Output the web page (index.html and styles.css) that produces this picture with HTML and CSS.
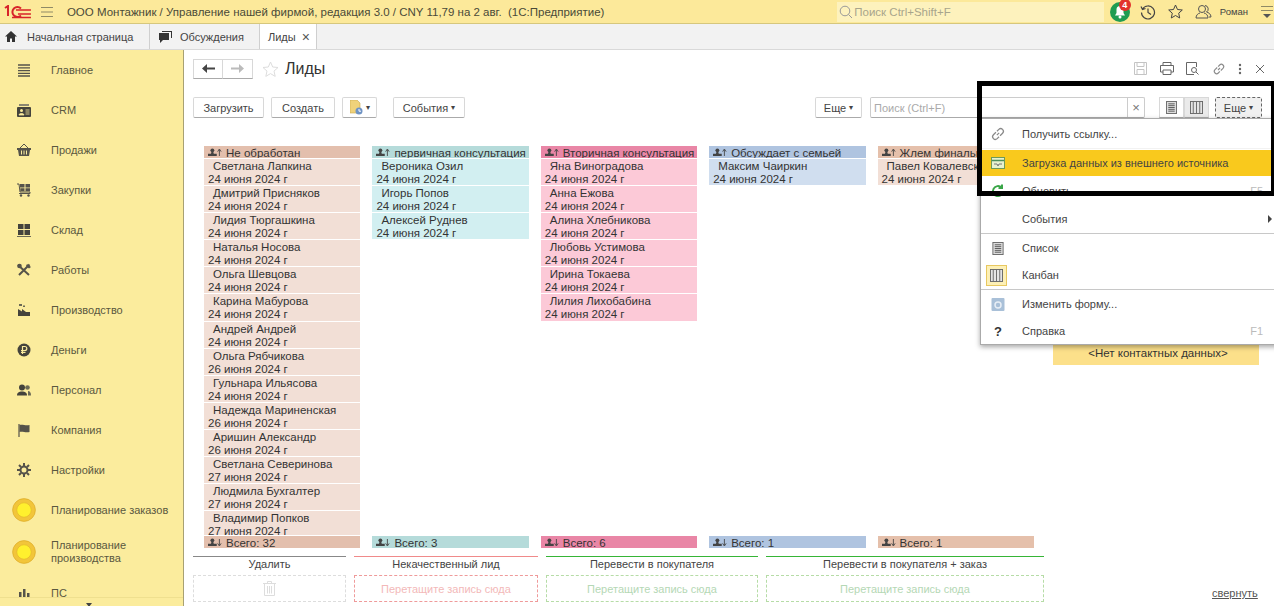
FILE: index.html
```html
<!DOCTYPE html>
<html lang="ru">
<head>
  <meta charset="UTF-8" />
  <title>Лиды</title>
  <link rel="stylesheet" href="styles.css">
</head>
<body>

<svg class="defs" width="0" height="0">
  <symbol id="i-up" viewBox="0 0 16 10">
    <circle cx="5" cy="2.5" r="2.2" fill="#444"/>
    <path d="M4 4h2l.6 2.5H10V9H0V6.5h3.4z" fill="#444"/>
    <path d="M13 9V2M11 4l2-3 2 3" fill="none" stroke="#444"/>
  </symbol>
  <symbol id="i-down" viewBox="0 0 16 10">
    <circle cx="5" cy="2.5" r="2.2" fill="#444"/>
    <path d="M4 4h2l.6 2.5H10V9H0V6.5h3.4z" fill="#444"/>
    <path d="M13 1v7M11 6l2 3 2-3" fill="none" stroke="#444"/>
  </symbol>
  <symbol id="i-link" viewBox="0 0 14 14">
    <path d="M6 8l2-2M5.2 5.5L3 7.7a2.3 2.3 0 0 0 3.3 3.3l1.6-1.6M8.8 8.5L11 6.3A2.3 2.3 0 0 0 7.7 3L6.1 4.6" fill="none" stroke="#8a8a8a" stroke-width="1.1"/>
  </symbol>
  <symbol id="i-list" viewBox="0 0 12 14">
    <rect x=".5" y=".5" width="11" height="13" fill="#ddd" stroke="#666"/>
    <path d="M2.5 3h7M2.5 5h7M2.5 7h7M2.5 9h7M2.5 11h7" stroke="#555"/>
  </symbol>
  <symbol id="i-kanban" viewBox="0 0 14 14">
    <rect x=".5" y=".5" width="13" height="13" fill="#e4e4e4" stroke="#666"/>
    <path d="M3.5 1v12M7 1v12M10.500 1v12" stroke="#666"/>
  </symbol>
  <symbol id="i-sun" viewBox="0 0 40 40">
    <circle cx="20" cy="20" r="19" fill="#f2c53a" stroke="#d9a520" stroke-width="1"/>
    <circle cx="20" cy="20" r="12" fill="#fff02e" stroke="#e0b528"/>
  </symbol>
</svg>

<header class="topbar">
  <svg class="logo" width="28" height="14" viewBox="0 0 28 14">
    <path d="M1 3l3-2v10" fill="none" stroke="#d8232a" stroke-width="2"/>
    <path d="M17 3.500a5 5 0 1 0 0 7" fill="none" stroke="#d8232a" stroke-width="2"/>
    <path d="M12 5h15M14 9h13M8 12.500h19" fill="none" stroke="#d8232a" stroke-width="1.500"/>
  </svg>
  <svg class="burger" width="14" height="12" viewBox="0 0 14 12"><path d="M1 1.500h12M1 6h12M1 10.500h12" stroke="#8f8a66" stroke-width="1.200"/></svg>
  <div class="app-title">ООО Монтажник / Управление нашей фирмой, редакция 3.0 / CNY 11,79 на 2 авг.&nbsp; (1С:Предприятие)</div>
  <div class="top-search">
    <svg width="14" height="14" viewBox="0 0 14 14"><circle cx="6" cy="6" r="4.800" fill="none" stroke="#999"/><path d="M9.500 9.500l3.500 3.500" stroke="#999"/></svg>
    <span>Поиск Ctrl+Shift+F</span>
  </div>
  <div class="bell">
    <svg width="20" height="20" viewBox="0 0 20 20"><circle cx="10" cy="10" r="10" fill="#1f9c52"/><path d="M10 4a3.500 3.500 0 0 0-3.500 3.500V11L5 13.500h10L13.500 11V7.500A3.500 3.500 0 0 0 10 4z" fill="#fff"/><circle cx="10" cy="15" r="1.500" fill="#fff"/></svg>
    <span class="badge">4</span>
  </div>
  <svg class="top-ic hist" width="16" height="16" viewBox="0 0 16 16"><path d="M2.500 5a6.500 6.500 0 1 1-1 3.500M1 2.500L2.500 5.500 5.500 4.500M8 4.500V8.500L11 10.500" fill="none" stroke="#444" stroke-width="1.200"/></svg>
  <svg class="top-ic star" width="15" height="15" viewBox="0 0 15 15"><path d="M7.500 1l2 4.500 4.800.5-3.600 3.200 1 4.800-4.200-2.500L3.300 14l1-4.800L.7 6l4.800-.5z" fill="none" stroke="#444"/></svg>
  <svg class="top-ic user" width="17" height="15" viewBox="0 0 17 15"><circle cx="7" cy="5" r="3.500" fill="none" stroke="#555"/><path d="M1 14c0-3 2-4.500 4-5M13 14c0-3-2-4.500-4-5M1 14h12M10 1.500a3.500 3.500 0 0 1 1.500 6.500c2 .5 4.500 2 4.500 5h-2" fill="none" stroke="#555"/></svg>
  <span class="user-name">Роман</span>
  <svg class="top-ic more" width="14" height="14" viewBox="0 0 14 14"><path d="M1 1.500h12M1 5.500h12" stroke="#8f8a66"/><path d="M3 9h8l-4 4z" fill="#555"/></svg>
</header>

<nav class="tabs">
  <div class="tab tab-home">
    <svg width="12" height="11" viewBox="0 0 12 11"><path d="M6 0L0 5.500h2V11h3V7.500h2V11h3V5.500h2z" fill="#333"/></svg>
    Начальная страница
  </div>
  <div class="tab tab-talk">
    <svg width="15" height="13" viewBox="0 0 15 13"><path d="M4 1h10v7h-1V2H4z" fill="#333"/><path d="M1 3h10v7H5l-3 3v-3H1z" fill="#333"/></svg>
    Обсуждения
  </div>
  <div class="tab tab-active">Лиды <span class="tab-x">×</span></div>
</nav>

<div class="main">
  <aside class="sidebar">
    <a class="side-row"><svg viewBox="0 0 14 14"><path d="M1 2h12M1 4.800h12M1 7.600h12M1 10.400h12M1 13h12" stroke="#55534a" stroke-width="1.300"/></svg><span>Главное</span></a>
    <a class="side-row"><svg viewBox="0 0 14 14"><path d="M2 1h10v2H2z" fill="#8a8670"/><rect y="4" width="14" height="10" rx="1" fill="#44433c"/><circle cx="4.500" cy="7.500" r="1.500" fill="#fbec9d"/><path d="M2 12c0-2 5-2 5 0zM8.500 7h4M8.500 9h4M8.500 11h4" fill="#fbec9d" stroke="#fbec9d" stroke-width=".8"/></svg><span>CRM</span></a>
    <a class="side-row"><svg viewBox="0 0 14 14"><path d="M3 5l4-4 4 4" fill="none" stroke="#55534a"/><path d="M0 5h14v2h-1l-1 6H2L1 7H0z" fill="#55534a"/><path d="M4.500 7.500v4M7 7.500v4M9.500 7.500v4" stroke="#fbec9d"/></svg><span>Продажи</span></a>
    <a class="side-row"><svg viewBox="0 0 14 14"><path d="M0 1h2l1 8h10v1.500H2" fill="none" stroke="#55534a"/><path d="M3 1h4.500v3.500H3zM8.500 1H13v3.500H8.500zM3.300 5.300h4.200v3H3.300zM8.500 5.300H13v3H8.500z" fill="#55534a"/><circle cx="4" cy="12.500" r="1.200" fill="#55534a"/><circle cx="11.500" cy="12.500" r="1.200" fill="#55534a"/></svg><span>Закупки</span></a>
    <a class="side-row"><svg viewBox="0 0 14 14"><path d="M1 1h5.500v5H1zM7.500 1H13v5H7.500zM1 7h5.500v5H1zM7.500 7H13v5H7.500z" fill="#44433c"/><path d="M0 13.500h14" stroke="#6b6955"/></svg><span>Склад</span></a>
    <a class="side-row"><svg viewBox="0 0 14 14"><path d="M1 2l11 10M12.500 1.500L2 12" stroke="#55534a" stroke-width="2"/><circle cx="2.500" cy="3" r="2.300" fill="#55534a"/><path d="M10 1l4 3-2 1.500L9 3z" fill="#55534a"/></svg><span>Работы</span></a>
    <a class="side-row"><svg viewBox="0 0 14 14"><path d="M1 13V6l4 2.500V6l4 3h4v4z" fill="#44433c"/><path d="M2 1h3v2H2zM6 2.500h2v1.500H6z" fill="#6b6955"/></svg><span>Производство</span></a>
    <a class="side-row"><svg viewBox="0 0 14 14"><circle cx="7" cy="7" r="6.500" fill="#44433c"/><path d="M5.500 11V3.500h2.300a2 2 0 0 1 0 4H4M4 9.300h4.500" fill="none" stroke="#fbec9d" stroke-width="1.200"/></svg><span>Деньги</span></a>
    <a class="side-row"><svg viewBox="0 0 14 14"><circle cx="5" cy="4.500" r="3" fill="#44433c"/><path d="M0 12.500c0-3 2-4 5-4s5 1 5 4z" fill="#44433c"/><circle cx="10.500" cy="4.500" r="2.300" fill="#6b6955"/><path d="M11 8c2 0 3 1.500 3 4.500h-3z" fill="#6b6955"/></svg><span>Персонал</span></a>
    <a class="side-row"><svg viewBox="0 0 14 14"><path d="M2 1v13" stroke="#55534a" stroke-width="1.200"/><path d="M2.500 2c3-1 6 1 10 0v7c-4 1-7-1-10 0z" fill="#55534a"/></svg><span>Компания</span></a>
    <a class="side-row"><svg viewBox="0 0 14 14"><circle cx="7" cy="7" r="3.500" fill="none" stroke="#55534a" stroke-width="2"/><path d="M7 0v3M7 11v3M0 7h3M11 7h3M2 2l2 2M10 10l2 2M12 2l-2 2M4 10l-2 2" stroke="#55534a" stroke-width="2"/></svg><span>Настройки</span></a>
    <a class="side-row side-sun side-plan"><svg><use href="#i-sun"/></svg><span>Планирование заказов</span></a>
    <a class="side-row side-sun side-plan2"><svg><use href="#i-sun"/></svg><span>Планирование<br>производства</span></a>
    <a class="side-row side-last"><svg viewBox="0 0 14 14"><path d="M2 6h2.500v7H2zM6 3h2.500v10H6zM10 7h2.500v6H10z" fill="#55534a"/></svg><span>ПС</span></a>
    <div class="side-bottom"><i></i></div>
  </aside>

  <section class="content">
    <div class="page-head">
      <div class="nav-btns">
        <button class="nav-btn"><svg width="13" height="9" viewBox="0 0 13 9"><path d="M13 3.500H5V0L0 4.500 5 9V5.500h8z" fill="#444"/></svg></button>
        <button class="nav-btn"><svg width="13" height="9" viewBox="0 0 13 9"><path d="M0 3.500h8V0l5 4.500L8 9V5.500H0z" fill="#bbb"/></svg></button>
      </div>
      <svg class="fav" width="17" height="16" viewBox="0 0 17 16"><path d="M8.500 1l2.200 5 5.300.5-4 3.600 1.200 5.300-4.700-2.800-4.700 2.800 1.200-5.300-4-3.600L6.300 6z" fill="none" stroke="#ddd"/></svg>
      <h1>Лиды</h1>
      <div class="page-tools">
        <svg width="13" height="13" viewBox="0 0 13 13"><path d="M.5.500h12v12H.5zM3 .500v4h7v-4M3 12.500v-5h7v5" fill="none" stroke="#c4c4c4"/></svg>
        <svg width="14" height="13" viewBox="0 0 14 13"><path d="M3 3V.5h8V3M3 10H.5V3.500h13V10H11M3 8h8v4.500H3z" fill="none" stroke="#666"/></svg>
        <svg width="13" height="13" viewBox="0 0 13 13"><path d="M8 12.500H.5V.5h10V5" fill="none" stroke="#666"/><circle cx="8" cy="8" r="2.500" fill="none" stroke="#666"/><path d="M10 10l2.500 2.500" stroke="#666"/></svg>
        <svg width="14" height="14"><use href="#i-link"/></svg>
        <svg width="4" height="12" viewBox="0 0 4 12"><circle cx="2" cy="2" r="1.200" fill="#666"/><circle cx="2" cy="6" r="1.200" fill="#666"/><circle cx="2" cy="10" r="1.200" fill="#666"/></svg>
        <svg width="10" height="10" viewBox="0 0 10 10"><path d="M1 1l8 8M9 1l-8 8" stroke="#666"/></svg>
      </div>
    </div>

    <div class="toolbar">
      <button class="btn btn-load">Загрузить</button>
      <button class="btn btn-create">Создать</button>
      <button class="btn btn-file">
        <svg width="13" height="15" viewBox="0 0 13 15"><path d="M0 0h7l3 3v10H0z" fill="#f0d27a" stroke="#c9a84f" stroke-width=".6"/><circle cx="9" cy="11" r="3.500" fill="#6f93c4"/><path d="M9 9v2.200h2" stroke="#fff" fill="none"/></svg>
        <b class="caret">▾</b>
      </button>
      <button class="btn btn-events">События <b class="caret">▾</b></button>
      <button class="btn btn-more">Еще <b class="caret">▾</b></button>
      <div class="search">
        <span class="search-text">Поиск (Ctrl+F)</span>
        <span class="search-x">×</span>
      </div>
      <div class="view-toggle">
        <span class="view-btn"><svg width="11" height="13"><use href="#i-list"/></svg></span>
        <span class="view-btn view-on"><svg width="13" height="13"><use href="#i-kanban"/></svg></span>
      </div>
      <button class="btn btn-more2">Еще <b class="caret">▾</b></button>
    </div>

    <div class="board">
      <div class="col col-new">
        <div class="col-head"><svg><use href="#i-up"/></svg>Не обработан</div>
        <div class="col-body">
          <div class="card"><p>Светлана Лапкина</p>24 июня 2024 г</div>
          <div class="card"><p>Дмитрий Присняков</p>24 июня 2024 г</div>
          <div class="card"><p>Лидия Тюргашкина</p>24 июня 2024 г</div>
          <div class="card"><p>Наталья Носова</p>24 июня 2024 г</div>
          <div class="card"><p>Ольга Шевцова</p>24 июня 2024 г</div>
          <div class="card"><p>Карина Мабурова</p>24 июня 2024 г</div>
          <div class="card"><p>Андрей Андрей</p>24 июня 2024 г</div>
          <div class="card"><p>Ольга Рябчикова</p>26 июня 2024 г</div>
          <div class="card"><p>Гульнара Ильясова</p>24 июня 2024 г</div>
          <div class="card"><p>Надежда Мариненская</p>26 июня 2024 г</div>
          <div class="card"><p>Аришин Александр</p>26 июня 2024 г</div>
          <div class="card"><p>Светлана Северинова</p>27 июня 2024 г</div>
          <div class="card"><p>Людмила Бухгалтер</p>27 июня 2024 г</div>
          <div class="card"><p>Владимир Попков</p>27 июня 2024 г</div>
        </div>
        <div class="col-foot"><svg><use href="#i-down"/></svg>Всего: 32</div>
      </div>
      <div class="col col-first">
        <div class="col-head"><svg><use href="#i-up"/></svg>первичная консультация</div>
        <div class="col-body">
          <div class="card"><p>Вероника Озил</p>24 июня 2024 г</div>
          <div class="card"><p>Игорь Попов</p>24 июня 2024 г</div>
          <div class="card"><p>Алексей Руднев</p>24 июня 2024 г</div>
        </div>
        <div class="col-foot"><svg><use href="#i-down"/></svg>Всего: 3</div>
      </div>
      <div class="col col-second">
        <div class="col-head"><svg><use href="#i-up"/></svg>Вторичная консультация</div>
        <div class="col-body">
          <div class="card"><p>Яна Виноградова</p>24 июня 2024 г</div>
          <div class="card"><p>Анна Ежова</p>24 июня 2024 г</div>
          <div class="card"><p>Алина Хлебникова</p>24 июня 2024 г</div>
          <div class="card"><p>Любовь Устимова</p>24 июня 2024 г</div>
          <div class="card"><p>Ирина Токаева</p>24 июня 2024 г</div>
          <div class="card"><p>Лилия Лихобабина</p>24 июня 2024 г</div>
        </div>
        <div class="col-foot"><svg><use href="#i-down"/></svg>Всего: 6</div>
      </div>
      <div class="col col-family">
        <div class="col-head"><svg><use href="#i-up"/></svg>Обсуждает с семьей</div>
        <div class="col-body">
          <div class="card"><p>Максим Чаиркин</p>24 июня 2024 г</div>
        </div>
        <div class="col-foot"><svg><use href="#i-down"/></svg>Всего: 1</div>
      </div>
      <div class="col col-final">
        <div class="col-head"><svg><use href="#i-up"/></svg>Жлем финальное решение</div>
        <div class="col-body">
          <div class="card"><p>Павел Ковалевский</p>24 июня 2024 г</div>
        </div>
        <div class="col-foot"><svg><use href="#i-down"/></svg>Всего: 1</div>
      </div>
      <div class="col col-nodata">
        <div class="col-body">
          <div class="card">&lt;Нет контактных данных&gt;</div>
        </div>
      </div>
    </div>

    <div class="drops">
      <div class="drop drop-del">
        <div class="drop-label">Удалить</div>
        <div class="drop-box"><svg width="13" height="15" viewBox="0 0 13 15"><path d="M0 2.500h13M4.500 2V.5h4V2M1.500 3v11.500h10V3M4.500 5v7.500M6.500 5v7.500M8.500 5v7.500" fill="none" stroke="#ddd"/></svg></div>
      </div>
      <div class="drop drop-bad">
        <div class="drop-label">Некачественный лид</div>
        <div class="drop-box">Перетащите запись сюда</div>
      </div>
      <div class="drop drop-buyer">
        <div class="drop-label">Перевести в покупателя</div>
        <div class="drop-box">Перетащите запись сюда</div>
      </div>
      <div class="drop drop-order">
        <div class="drop-label">Перевести в покупателя + заказ</div>
        <div class="drop-box">Перетащите запись сюда</div>
      </div>
      <a class="collapse">свернуть</a>
    </div>
  </section>
</div>

<!-- menu Еще -->
<div class="menu">
  <div class="item"><svg width="16" height="16"><use href="#i-link"/></svg><span>Получить ссылку...</span></div>
  <div class="sep-light"></div>
  <div class="item item-hover">
    <svg width="14" height="14" viewBox="0 0 14 14"><rect x=".5" y="1.500" width="13" height="11" fill="#e7f1cf" stroke="#6d9a5a"/><path d="M1 4.500h12" stroke="#4d8f5a" stroke-width="1.500"/><path d="M3 8h3l1 2 1-2h3" fill="none" stroke="#777"/></svg>
    <span>Загрузка данных из внешнего источника</span>
  </div>
  <div class="sep-blank"></div>
  <div class="item"><svg width="14" height="14" viewBox="0 0 14 14"><path d="M12 7a5 5 0 1 1-1.500-3.500M11 .5v3.500H7.500" fill="none" stroke="#3aa648" stroke-width="2"/></svg><span>Обновить</span><em>F5</em></div>
  <div class="sep-blank"></div>
  <div class="item"><i class="no-ic"></i><span>События</span><b class="arrow"></b></div>
  <div class="sep"></div>
  <div class="item"><svg width="11" height="13"><use href="#i-list"/></svg><span>Список</span></div>
  <div class="item"><i class="kanban-on"><svg width="13" height="13"><use href="#i-kanban"/></svg></i><span>Канбан</span></div>
  <div class="sep"></div>
  <div class="item"><svg width="13" height="13" viewBox="0 0 13 13"><rect width="13" height="13" rx="1" fill="#a9c0d8"/><circle cx="6.500" cy="7" r="3" fill="none" stroke="#e8eef5" stroke-width="1.500"/></svg><span>Изменить форму...</span></div>
  <div class="item"><i class="help">?</i><span>Справка</span><em>F1</em></div>
</div>

<!-- рамка-выделение поверх скриншота -->
<div class="callout"></div>

</body>
</html>
```

FILE: styles.css
```css
:root {
  --panel: #fbec9d;
  --text: #333;
  --side-text: #5a5840;
  --line: #c8c8c8;
}
* { box-sizing: border-box; }
body {
  margin: 0;
  width: 1274px;
  height: 606px;
  overflow: hidden;
  position: relative;
  display: flex;
  flex-direction: column;
  background: #fff;
  color: var(--text);
  font-family: "Liberation Sans", Arial, sans-serif;
  font-size: 11px;
}
.defs { position: absolute; }
button { font-family: inherit; }

/* top bar */
.topbar {
  height: 24px;
  flex: none;
  display: flex;
  align-items: center;
  background: #fce99a;
  border-bottom: 1px solid #d6c77d;
}
.logo { margin-left: 4px; }
.burger { margin-left: 8px; }
.app-title { margin-left: 13px; font-size: 11.5px; color: #4a4a38; width: 772px; white-space: nowrap; }
.top-search {
  width: 267px;
  height: 20px;
  display: flex;
  align-items: center;
  gap: 1px;
  padding-left: 2px;
  background: #fdf2bd;
  color: #a8a58c;
  font-size: 11.5px;
}
.bell { position: relative; width: 20px; height: 20px; margin-left: 6px; }
.badge {
  position: absolute;
  top: -3px;
  left: 9px;
  width: 12px;
  height: 12px;
  border-radius: 50%;
  background: #e2322c;
  color: #fff;
  font-size: 9px;
  font-weight: bold;
  line-height: 12px;
  text-align: center;
}
.top-ic { flex: none; }
.hist { margin-left: 10px; }
.star { margin-left: 12px; }
.user { margin-left: 12px; }
.user-name { margin-left: 8px; font-size: 9.5px; color: #444; }
.more { margin-left: 12px; }

/* tabs */
.tabs {
  height: 26px;
  flex: none;
  display: flex;
  background: #f2f2f2;
  border-bottom: 1px solid #d9d9d9;
}
.tab {
  display: flex;
  align-items: center;
  height: 25px;
  font-size: 11px;
  border-right: 1px solid #cfcfcf;
  white-space: nowrap;
  color: #444;
}
.tab-home { width: 150px; padding-left: 5px; gap: 10px; }
.tab-talk { width: 110px; padding-left: 8px; gap: 7px; }
.tab-active {
  width: 57px;
  padding-left: 8px;
  gap: 6px;
  background: #fff;
  box-shadow: inset 2px -3px 0 #fff, inset 0 -3px 0 #3d9a6e;
  border-bottom: 0;
}
.tab-x { font-size: 14px; color: #555; }

/* sidebar */
.main { flex: 1; min-height: 0; display: flex; }
.sidebar {
  width: 184px;
  flex: none;
  position: relative;
  overflow: hidden;
  background: var(--panel);
  border-right: 1px solid #a8a173;
}
.side-row {
  height: 40px;
  display: flex;
  align-items: center;
  color: var(--side-text);
  font-size: 11px;
  line-height: 13px;
}
.side-row svg {
  width: 14px;
  height: 14px;
  margin-left: 17px;
  margin-right: 20px;
  flex: none;
}
.side-sun svg {
  width: 24px;
  height: 24px;
  margin-left: 12px;
  margin-right: 15px;
}
.side-plan2 { height: 44px; }
.side-last { height: 38px; }
.side-bottom {
  position: absolute;
  left: 0;
  right: 0;
  bottom: 0;
  height: 9px;
  background: var(--panel);
  border-top: 1px solid #efe08f;
}
.side-bottom i {
  position: absolute;
  left: 86px;
  top: 5px;
  border: 3px solid transparent;
  border-top: 4px solid #444;
}

/* content */
.content { flex: 1; min-width: 0; display: flex; flex-direction: column; padding-left: 9px; }
.page-head { height: 35px; flex: none; display: flex; align-items: center; padding-top: 2px; }
.nav-btns { display: flex; }
.nav-btn {
  width: 30px;
  height: 20px;
  padding: 0;
  display: flex;
  align-items: center;
  justify-content: center;
  background: #fff;
  border: 1px solid #d8d8d8;
  border-bottom-color: #aaa;
}
.nav-btn + .nav-btn { border-left: 0; }
.fav { margin-left: 9px; }
h1 { margin: 0 0 0 6px; font-size: 16px; font-weight: normal; color: #333; }
.page-tools {
  margin-left: auto;
  width: 140px;
  display: flex;
  align-items: center;
  justify-content: space-between;
  padding-right: 9px;
}

.toolbar { height: 21px; flex: none; margin-top: 12px; display: flex; }
.btn {
  height: 21px;
  padding: 0;
  background: #fff;
  color: #444;
  font-size: 11px;
  border: 1px solid #d8d8d8;
  border-bottom-color: #aaa;
  border-radius: 2px;
  flex: none;
  display: flex;
  align-items: center;
  justify-content: center;
  gap: 3px;
}
.caret { font-size: 8px; font-weight: normal; color: #444; }
.btn-load { width: 71px; }
.btn-create { width: 64px; margin-left: 7px; }
.btn-file { width: 35px; margin-left: 7px; }
.btn-events { width: 72px; margin-left: 16px; }
.btn-more { width: 47px; margin-left: 350px; }
.search {
  width: 275px;
  margin-left: 8px;
  height: 21px;
  display: flex;
  align-items: center;
  justify-content: space-between;
  background: #fff;
  border: 1px solid #ccc;
  border-bottom-color: #aaa;
  border-radius: 2px;
}
.search-text { margin-left: 3px; color: #aaa; }
.search-x {
  width: 17px;
  text-align: center;
  color: #777;
  font-size: 13px;
  line-height: 19px;
  border-left: 1px solid #ccc;
}
.view-toggle { display: flex; margin-left: 14px; }
.view-btn {
  width: 25px;
  height: 21px;
  display: flex;
  align-items: center;
  justify-content: center;
  background: #fff;
  border: 1px solid #d8d8d8;
  border-bottom-color: #aaa;
}
.view-on { background: #eaeaea; }
.btn-more2 { width: 47px; margin-left: 6px; background: #f0f0f0; border: 1px dashed #666; }

/* board */
.board {
  flex: 1;
  min-height: 0;
  margin-top: 28px;
  padding-left: 11px;
  display: flex;
  overflow: hidden;
}
.col {
  width: 156.4px;
  flex: none;
  margin-right: 12px;
  display: flex;
  flex-direction: column;
  font-size: 11.5px;
  color: #333;
}
.col-head, .col-foot {
  height: 12px;
  flex: none;
  overflow: hidden;
  padding-left: 4px;
  line-height: 14px;
  white-space: nowrap;
}
.col-head svg, .col-foot svg { width: 14px; height: 9px; margin-right: 4px; }
.col-body { flex: 1; min-height: 0; margin-top: 1px; margin-bottom: 1px; overflow: hidden; }
.card {
  height: 26.1px;
  margin-bottom: 1px;
  padding: 1px 0 0 4px;
  line-height: 13px;
  overflow: hidden;
  white-space: nowrap;
}
.card p { margin: 0; padding-left: 5px; }
.col-new .col-head, .col-new .col-foot { background: #e3bfad; }
.col-new .card { background: #f2dfd6; }
.col-first .col-head, .col-first .col-foot { background: #b5dbda; }
.col-first .card { background: #d2eff1; }
.col-second .col-head, .col-second .col-foot { background: #e986a6; }
.col-second .card { background: #fcc9d7; }
.col-family .col-head, .col-family .col-foot { background: #afc4e0; }
.col-family .card { background: #d0deef; }
.col-final .col-head, .col-final .col-foot { background: #e5c0ab; }
.col-final .card { background: #f2dfd6; }
.col-nodata { width: 206px; margin-left: 7px; margin-right: 0; }
.col-nodata .col-body { padding-top: 193px; margin-top: 0; }
.col-nodata .card { height: 26px; padding-top: 8px; text-align: center; background: #fce08a; }

/* drop zones */
.drops { height: 50px; flex: none; margin-top: 8px; display: flex; gap: 8px; align-items: flex-start; }
.drop { flex: none; }
.drop-label { height: 19px; line-height: 15px; text-align: center; font-size: 11px; color: #444; border-top: 1px solid; }
.drop-box {
  height: 27px;
  display: flex;
  align-items: center;
  justify-content: center;
  font-size: 11px;
  border: 1px dashed;
}
.drop-del { width: 153px; }
.drop-del .drop-label { border-top-color: #888; }
.drop-del .drop-box { border-color: #ddd; }
.drop-bad { width: 184px; }
.drop-bad .drop-label { border-top-color: #f08a8a; }
.drop-bad .drop-box { border-color: #ef9a9a; color: #f3b9b9; }
.drop-buyer { width: 212px; }
.drop-order { width: 278px; }
.drop-buyer .drop-label, .drop-order .drop-label { border-top-color: #36b536; }
.drop-buyer .drop-box, .drop-order .drop-box { border-color: #b6dca6; color: #b5d8b5; }
.collapse { margin: 31px 0 0 160px; color: #555; font-size: 11px; text-decoration: underline; white-space: nowrap; }

/* dropdown menu */
.menu {
  position: absolute;
  left: 980px;
  top: 118px;
  width: 300px;
  height: 227px;
  padding-top: 2px;
  background: #fff;
  border: 1px solid #aaa;
  box-shadow: 0 2px 5px rgba(0,0,0,0.35);
}
.item {
  height: 26px;
  margin: 0 6px 1px 1px;
  padding-right: 10px;
  display: flex;
  align-items: center;
  font-size: 11px;
  color: #444;
  position: relative;
}
.item > svg, .item > i { width: 22px; margin-left: 5px; flex: none; }
.item > span { margin-left: 13px; }
.item > svg { margin-right: 0; }
.item em { margin-left: auto; font-style: normal; color: #bbb; }
.item-hover { background: #f9c91d; margin-right: 6px; }
.no-ic { display: block; }
.kanban-on {
  display: flex !important;
  width: 21px !important;
  height: 21px;
  align-items: center;
  justify-content: center;
  background: #fdf0b6;
  border: 1px solid #e8c860;
  margin-left: 4px !important;
  margin-right: 2px;
}
.help { font-style: normal; font-weight: bold; font-size: 13px; text-align: center; color: #333; }
.arrow {
  margin-left: auto;
  margin-right: -9px;
  border: 4px solid transparent;
  border-left: 4px solid #444;
  border-right: 0;
}
.sep { height: 1px; margin-bottom: 1px; background: var(--line); }
.sep-light { height: 1px; margin-bottom: 1px; background: #f2f2f2; }
.sep-blank { height: 1px; }

/* black frame */
.callout {
  position: absolute;
  left: 977px;
  top: 81px;
  width: 297px;
  height: 115px;
  border: 5px solid #000;
  border-right-width: 3px;
}
```
